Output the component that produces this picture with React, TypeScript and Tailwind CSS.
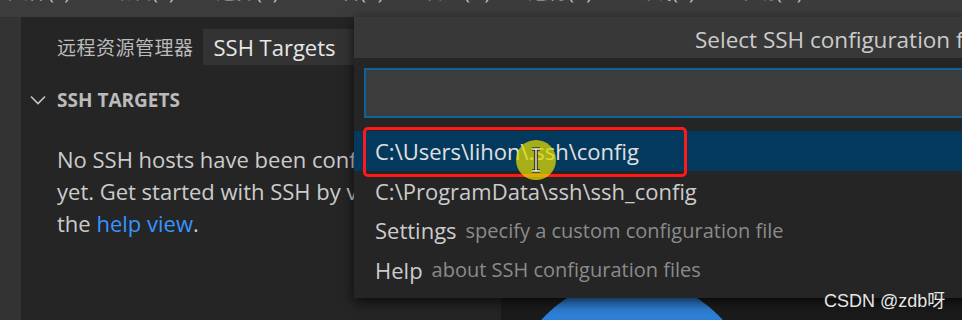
import React from 'react';

const menuItems = ['文件(F)', '编辑(E)', '选择(S)', '查看(V)', '转到(G)', '运行(R)', '终端(T)', '帮助(H)'];

const font = { fontFamily: '"Open Sans", "Noto Sans CJK SC", sans-serif' };

interface PickItem {
  label: string;
  detail?: string;
  selected?: boolean;
}

const pickItems: PickItem[] = [
  { label: 'C:\\Users\\lihon\\.ssh\\config', selected: true },
  { label: 'C:\\ProgramData\\ssh\\ssh_config' },
  { label: 'Settings', detail: 'specify a custom configuration file' },
  { label: 'Help', detail: 'about SSH configuration files' },
];

export default function App() {
  return (
    <div className="relative w-[962px] h-[320px] overflow-hidden bg-[#1e1e1e]" style={font}>
      {/* menu bar, only the bottom of the labels shows */}
      <div className="h-[17px] overflow-hidden bg-[#3c3c3c]">
        <div className="flex -mt-[20px] pl-[8px] text-[20px] leading-[24px] text-[#bdbdbd]">
          {menuItems.map((m) => (
            <span key={m} className="w-[104px] shrink-0">{m}</span>
          ))}
          <span className="ml-[90px] text-[#999]">·· ··</span>
        </div>
      </div>

      <div className="flex h-[303px]">
        {/* activity bar */}
        <div className="w-[21px] shrink-0 bg-[#333333]" />

        {/* sidebar */}
        <div className="w-[480px] shrink-0 bg-[#252526]">
          <div className="flex items-center h-[48px] pt-[12px] pl-[36px]">
            <span className="text-[19px] text-[#bbbbbb] tracking-[0.5px] mt-[3px]">远程资源管理器</span>
            <div className="ml-[9px] h-[36px] w-[260px] bg-[#333333] flex items-center pl-[11px]">
              <span className="text-[22px] text-[#e7e7e7]">SSH Targets</span>
            </div>
          </div>
          <div className="flex items-center mt-[22px] pl-[9px] h-[26px]">
            <svg width="16" height="10" viewBox="0 0 16 10" className="mr-[11px]">
              <path d="M1 1.5 L8 8.5 L15 1.5" fill="none" stroke="#c5c5c5" strokeWidth="1.6" />
            </svg>
            <span className="text-[19px] font-bold text-[#bbbbbb]">SSH TARGETS</span>
          </div>
          <p className="pl-[36px] mt-[30px] text-[22px] leading-[32px] text-[#cccccc]">
            No SSH hosts have been configured
            <br />
            yet. Get started with SSH by visiting
            <br />
            the <span className="text-[#3794ff]">help view</span>.
          </p>
        </div>

        {/* editor */}
        <div className="flex-1 bg-[#1b1b1b]" />
      </div>

      {/* VS Code watermark arc beneath the quick pick */}
      <svg className="absolute left-[500px] top-[280px]" width="260" height="40" viewBox="0 0 260 40">
        <circle cx="132" cy="120" r="121" fill="#2e7fd6" />
      </svg>

      {/* quick pick overlay */}
      <div className="absolute left-[354px] top-[17px] w-[700px] h-[281px] bg-[#252526] shadow-[0_4px_12px_rgba(0,0,0,0.7)]">
        <div className="h-[41px] bg-[#383838] flex items-center pl-[341px] pt-[5px]">
          <span className="text-[22.5px] text-[#cccccc] whitespace-nowrap">Select SSH configuration file</span>
        </div>
        <div className="pt-[10px] pl-[10px]">
          <div className="h-[50px] border-2 border-[#0e639c] bg-[#3c3c3c]" />
        </div>
        <div className="mt-[13px]">
          {pickItems.map((it) => (
            <div
              key={it.label}
              className={`h-[39.5px] flex items-center pl-[21px] whitespace-nowrap ${it.selected ? 'bg-[#04395e] text-[#e0e0e0]' : 'text-[#cccccc]'}`}
            >
              <span className="text-[22px] mt-[2px]">{it.label}</span>
              {it.detail && <span className="ml-[9px] mt-[2px] text-[20px] text-[#8b8b8b]">{it.detail}</span>}
            </div>
          ))}
        </div>
      </div>

      {/* red highlight box drawn on top of the screenshot */}
      <div className="absolute left-[363px] top-[127px] w-[324px] h-[50px] border-[3px] border-[#ff1a1a] rounded-[5px]" />

      {/* mouse cursor with yellow halo */}
      <svg className="absolute left-[514px] top-[138px]" width="44" height="44" viewBox="0 0 44 44">
        <circle cx="22" cy="22" r="20" fill="rgba(220,215,0,0.75)" />
        <path d="M18 11 H26 M22 11 V33 M18 33 H26" stroke="#000" strokeWidth="3.2" />
        <path d="M18 11 H26 M22 11 V33 M18 33 H26" stroke="#fff" strokeWidth="1.4" />
      </svg>

      {/* watermark */}
      <div
        className="absolute left-[824px] top-[288px] text-[18px] text-[#e6e6e6]"
        style={{ fontFamily: '"Liberation Sans", "Noto Sans CJK SC", sans-serif' }}
      >
        CSDN @zdb呀
      </div>
    </div>
  );
}
